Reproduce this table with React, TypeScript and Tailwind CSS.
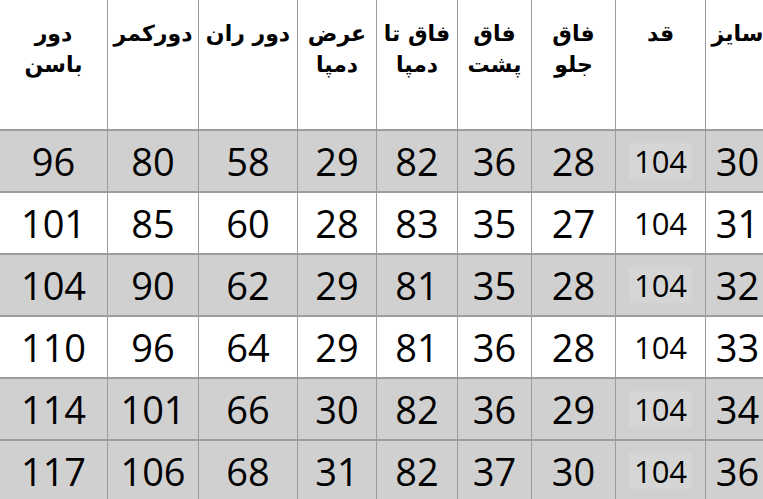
import React from "react";

const headers: string[][] = [
  ["دور", "باسن"],
  ["دورکمر"],
  ["دور ران"],
  ["عرض", "دمپا"],
  ["فاق تا", "دمپا"],
  ["فاق", "پشت"],
  ["فاق", "جلو"],
  ["قد"],
  ["سایز"],
];

const rows: { vals: string[]; gray: boolean }[] = [
  { vals: ["96", "80", "58", "29", "82", "36", "28", "104", "30"], gray: true },
  { vals: ["101", "85", "60", "28", "83", "35", "27", "104", "31"], gray: false },
  { vals: ["104", "90", "62", "29", "81", "35", "28", "104", "32"], gray: true },
  { vals: ["110", "96", "64", "29", "81", "36", "28", "104", "33"], gray: false },
  { vals: ["114", "101", "66", "30", "82", "36", "29", "104", "34"], gray: true },
  { vals: ["117", "106", "68", "31", "82", "37", "30", "104", "36"], gray: true },
];

export default function App() {
  return (
    <div className="w-[763px] h-[499px] overflow-hidden bg-white">
      <div className="grid grid-cols-[108px_91px_99px_79px_81px_74px_84px_90px_64px] w-[770px]">
        {headers.map((h, i) => (
          <div
            key={"h" + i}
            dir="rtl"
            className="h-[131px] box-border border-r border-b-2 border-[#9c9c9c] bg-white flex flex-col items-center pt-[18px] text-black font-bold text-[22px] leading-[31px]"
            style={{ fontFamily: '"DejaVu Sans", "Liberation Sans", sans-serif' }}
          >
            {h.map((line, j) => (
              <span key={j} className="whitespace-nowrap">
                {line}
              </span>
            ))}
          </div>
        ))}
        {rows.map((r, ri) =>
          r.vals.map((v, ci) => (
            <div
              key={ri + "-" + ci}
              className={
                "h-[62px] box-border border-r border-b-2 border-[#9c9c9c] flex items-center justify-center text-black " +
                (r.gray ? "bg-[#d0d0d0]" : "bg-white")
              }
              style={{ fontFamily: '"Open Sans", "Noto Sans", sans-serif' }}
            >
              {ci === 7 ? (
                <span
                  className={
                    "text-[31px] leading-[36px] px-[5px] " +
                    (r.gray ? "bg-[#d5d5d5]" : "")
                  }
                >
                  {v}
                </span>
              ) : (
                <span className="text-[38px] leading-[44px]">{v}</span>
              )}
            </div>
          ))
        )}
      </div>
    </div>
  );
}
